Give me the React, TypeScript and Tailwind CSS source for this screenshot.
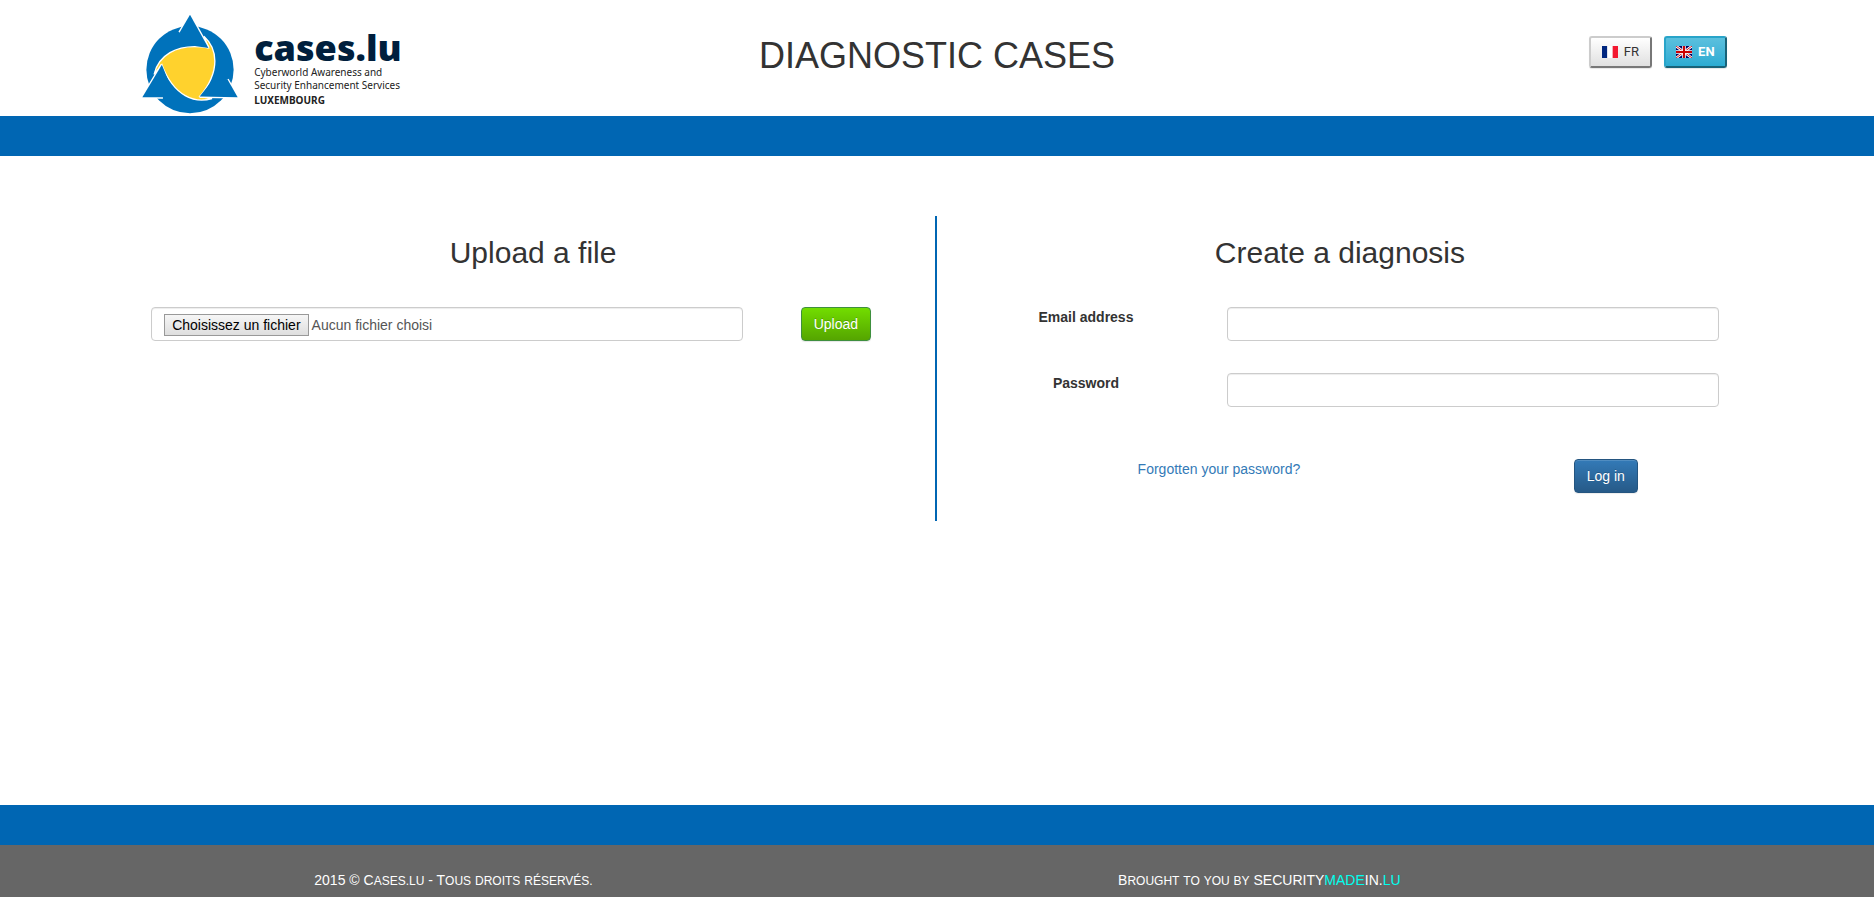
import { useState, type ReactNode } from "react";

function CasesMark() {
  return (
    <svg viewBox="-143 -166 286 298" className="h-25 w-24 shrink-0" aria-hidden="true">
      <circle r="130" fill="#0072bb" />
      <path
        d="M-107,14 C-96,-37 -46,-82 55,-65 L41.4,-99.7 C80,-64.6 94,1.2 28.8,80.1 L65.6,85.8 C15.9,101.6 -48,80.8 -83.8,-15.1 Z"
        fill="#ffd22d"
        stroke="#fff"
        strokeWidth="4"
      />
      {[0, 120, 240].map((angle) => (
        <g key={angle} transform={`rotate(${angle})`}>
          <path d="M-31,-111 L0,-164 L55,-65" fill="none" stroke="#fff" strokeWidth="8" />
          <path d="M-31,-111 L0,-164 L55,-65 L0,-73 Z" fill="#0072bb" />
        </g>
      ))}
    </svg>
  );
}

function FrenchFlag() {
  return (
    <svg viewBox="0 0 16 12" className="h-3 w-4" aria-hidden="true">
      <path fill="#00267f" d="M0 0h5.33v12H0z" />
      <path fill="#fff" d="M5.33 0h5.34v12H5.33z" />
      <path fill="#f31830" d="M10.67 0H16v12h-5.33z" />
    </svg>
  );
}

function BritishFlag() {
  return (
    <svg viewBox="0 0 16 12" className="h-3 w-4" aria-hidden="true">
      <path fill="#006" d="M0 0h16v12H0z" />
      <path stroke="#fff" strokeWidth="2.6" d="M0 0l16 12M16 0L0 12" />
      <path stroke="#c00" strokeWidth="0.9" d="M0 0l16 12M16 0L0 12" />
      <path stroke="#fff" strokeWidth="3.6" d="M8 0v12M0 6h16" />
      <path stroke="#c00" strokeWidth="2.1" d="M8 0v12M0 6h16" />
    </svg>
  );
}

/** Small capitals whose lower-case letters are drawn at 12px. */
function SmallCaps({ children }: { children: string }) {
  return children.split(/([a-zà-ÿ.]+)/).map((part, i) =>
    i % 2 ? (
      <span key={i} className="text-xs leading-none uppercase">
        {part}
      </span>
    ) : (
      part
    ),
  );
}

const field =
  "h-[34px] w-full rounded-sm border border-[#ccc] bg-white px-3 text-sm text-[#555] shadow-[inset_0_1px_1px_rgba(0,0,0,0.075)] outline-none focus:border-[#66afe9]";

function Field({ id, type, children }: { id: string; type: string; children: ReactNode }) {
  return (
    <div className="grid grid-cols-[1fr_2fr] pr-3 pl-5">
      <label htmlFor={id} className="text-center text-sm font-bold">
        {children}
      </label>
      <div className="px-3">
        <input id={id} type={type} className={field} />
      </div>
    </div>
  );
}

export default function App() {
  const [fileName, setFileName] = useState("Aucun fichier choisi");

  return (
    <div className="flex min-h-screen flex-col bg-white font-['Liberation_Sans',Arial,sans-serif] text-sm text-[#333]">
      <header className="grid grid-cols-3 items-start border-b-40 border-[#0066b3] px-[7%]">
        <a
          href="#"
          className="flex pt-3.5 pb-0.5 pl-[11px] font-['Noto_Sans','Open_Sans',sans-serif] text-[10px] leading-[13px] text-[#222]"
        >
          <CasesMark />
          <span className="flex flex-col pt-4 pl-4 whitespace-nowrap">
            <span className="font-['Open_Sans',sans-serif] text-4xl leading-9 font-extrabold text-[#001f3d]">
              cases.lu
            </span>
            <span>Cyberworld Awareness and</span>
            <span>Security Enhancement Services</span>
            <span className="pt-0.5 font-bold">LUXEMBOURG</span>
          </span>
        </a>
        <h1 className="pt-9 text-center text-4xl leading-10 whitespace-nowrap">DIAGNOSTIC CASES</h1>
        <div className="flex justify-end gap-3 pt-9 pr-4 font-[Roboto,sans-serif] text-[13px]">
          <button
            type="button"
            className="flex h-8 w-[63px] items-center justify-center gap-1.5 rounded-[3px] border-2 border-t-[#ccc] border-r-[#777] border-b-[#777] border-l-[#ccc] bg-linear-to-b from-white to-[#e0e0e0] shadow-[0_1px_1px_rgba(0,0,0,0.1)]"
          >
            <FrenchFlag />
            FR
          </button>
          <button
            type="button"
            className="flex h-8 w-[63px] items-center justify-center gap-1.5 rounded-[3px] border-2 border-t-[#28a4c9] border-r-[#186278] border-b-[#186278] border-l-[#28a4c9] bg-linear-to-b from-[#5bc0de] to-[#2aabd2] font-bold text-white shadow-[0_1px_1px_rgba(0,0,0,0.1)]"
          >
            <BritishFlag />
            EN
          </button>
        </div>
      </header>

      <main className="grid grid-cols-2 px-[7%] py-15">
        <section className="border-r-2 border-[#0066b3] pt-5">
          <h2 className="pb-[38px] text-center text-3xl leading-[33px]">Upload a file</h2>
          <form className="flex gap-[58px] pr-16 pl-5" onSubmit={(e) => e.preventDefault()}>
            <label className="flex h-[34px] flex-1 items-center gap-[3px] rounded-sm border border-[#ccc] px-3 pt-0.5 text-[#555] shadow-[inset_0_1px_1px_rgba(0,0,0,0.075)]">
              <input
                type="file"
                className="sr-only"
                onChange={(e) => setFileName(e.target.files?.[0]?.name ?? "Aucun fichier choisi")}
              />
              <span className="border border-[#999] bg-linear-to-b from-[#f6f6f6] to-[#dedede] px-[7px] text-black">
                Choisissez un fichier
              </span>
              <span>{fileName}</span>
            </label>
            <button
              type="submit"
              className="h-[34px] rounded-sm border border-[#3e8f3e] bg-linear-to-b from-[#72dd00] to-[#55a500] px-3 text-white shadow-[0_1px_1px_rgba(0,0,0,0.1)] text-shadow-[0_-1px_0_rgba(0,0,0,0.2)]"
            >
              Upload
            </button>
          </form>
        </section>

        <section className="pt-5 pb-7">
          <h2 className="pb-[38px] text-center text-3xl leading-[33px]">Create a diagnosis</h2>
          <form className="flex flex-col gap-8" onSubmit={(e) => e.preventDefault()}>
            <Field id="email" type="email">
              Email address
            </Field>
            <Field id="password" type="password">
              Password
            </Field>
            <div className="grid grid-cols-[2fr_1fr] items-start justify-items-center pt-5 pr-2 pl-6">
              <a href="#" className="text-[#337ab7] hover:underline">
                Forgotten your password?
              </a>
              <button
                type="submit"
                className="h-[34px] rounded-sm border border-[#245580] bg-linear-to-b from-[#337ab7] to-[#265a88] px-3 text-white shadow-[inset_0_1px_0_rgba(255,255,255,0.15),0_1px_1px_rgba(0,0,0,0.075)] text-shadow-[0_-1px_0_rgba(0,0,0,0.2)]"
              >
                Log in
              </button>
            </div>
          </form>
        </section>
      </main>

      <footer className="mt-auto grid grid-cols-2 border-t-40 border-[#0066b3] bg-[#666] px-[7%] pt-[25px] pb-[7px] text-white">
        <p className="w-4/5 text-center">
          <SmallCaps>2015 © Cases.lu - Tous droits réservés.</SmallCaps>
        </p>
        <p className="w-4/5 text-center">
          <SmallCaps>Brought to you by </SmallCaps>
          <a href="#">
            SECURITY<span className="text-[#00ffee]">MADE</span>IN.<span className="text-[#00ffee]">LU</span>
          </a>
        </p>
      </footer>
    </div>
  );
}
